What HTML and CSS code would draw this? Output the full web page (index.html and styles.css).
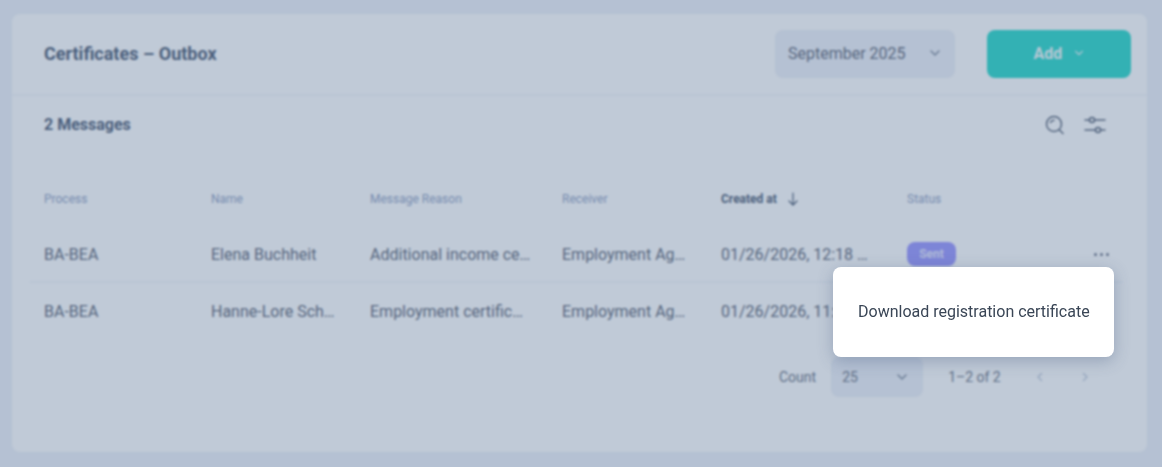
FILE: index.html
```html
<!DOCTYPE html>
<html lang="en">
<head>
    <meta charset="UTF-8">
    <meta name="viewport" content="width=device-width, initial-scale=1.0">
    <title>Certificates - Outbox</title>
    <link rel="stylesheet" href="styles.css">
</head>
<body>
    <main class="card">
        <header class="card-header">
            <h1>Certificates – Outbox</h1>
            <div class="select month-select">
                <span>September 2025</span>
                <svg class="chevron" width="12" height="12" viewBox="0 0 12 12"><path d="M2 4l4 4 4-4"/></svg>
            </div>
            <button class="add-button">
                <span>Add</span>
                <svg class="chevron" width="10" height="10" viewBox="0 0 12 12"><path d="M2 4l4 4 4-4"/></svg>
            </button>
        </header>

        <div class="toolbar">
            <h2>2 Messages</h2>
            <div class="tools">
                <svg class="tool" width="24" height="24" viewBox="0 0 24 24">
                    <circle cx="11" cy="11" r="7.500"/>
                    <path d="M7.500 9.500c.6-1.400 2-2.200 3.500-2.200M16.500 17l3.500 3.500"/>
                </svg>
                <svg class="tool" width="24" height="24" viewBox="0 0 24 24">
                    <path d="M2 7h4.500M11.500 7h10.500M2 17h10.500M17.500 17h4.500"/>
                    <circle cx="9" cy="7" r="2.500"/>
                    <circle cx="15" cy="17" r="2.500"/>
                </svg>
            </div>
        </div>

        <div class="table">
            <div class="row head-row">
                <div class="cell">Process</div>
                <div class="cell">Name</div>
                <div class="cell">Message Reason</div>
                <div class="cell">Receiver</div>
                <div class="cell sorted">
                    Created at
                    <svg width="14" height="14" viewBox="0 0 14 14"><path d="M7 1v12M3 9l4 4 4-4"/></svg>
                </div>
                <div class="cell">Status</div>
                <div class="cell"></div>
            </div>
            <div class="row">
                <div class="cell">BA-BEA</div>
                <div class="cell">Elena Buchheit</div>
                <div class="cell">Additional income certificate</div>
                <div class="cell">Employment Agency</div>
                <div class="cell">01/26/2026, 12:18 PM (CET)</div>
                <div class="cell"><span class="badge">Sent</span></div>
                <div class="cell more"><span></span><span></span><span></span></div>
            </div>
            <div class="row">
                <div class="cell">BA-BEA</div>
                <div class="cell">Hanne-Lore Schneider</div>
                <div class="cell">Employment certificate</div>
                <div class="cell">Employment Agency</div>
                <div class="cell">01/26/2026, 11:52 AM (CET)</div>
                <div class="cell"><span class="badge">Sent</span></div>
                <div class="cell more"><span></span><span></span><span></span></div>
            </div>
        </div>

        <footer class="pager">
            <span>Count</span>
            <div class="select count-select">
                <span>25</span>
                <svg class="chevron" width="12" height="12" viewBox="0 0 12 12"><path d="M2 4l4 4 4-4"/></svg>
            </div>
            <span class="range">1–2 of 2</span>
            <svg class="page-arrow" width="10" height="10" viewBox="0 0 10 10"><path d="M6.500 1.500L3 5l3.500 3.500"/></svg>
            <svg class="page-arrow" width="10" height="10" viewBox="0 0 10 10"><path d="M3.500 1.500L7 5 3.500 8.500"/></svg>
        </footer>
    </main>

    <div class="backdrop"></div>

    <div class="menu">Download registration certificate</div>
</body>
</html>
```

FILE: styles.css
```css
* {
    margin: 0;
    padding: 0;
    box-sizing: border-box;
}

body {
    font-family: Roboto, sans-serif;
    font-size: 16px;
    background: #eff2f9;
    color: #686f7f;
    height: 467px;
    overflow: hidden;
    padding: 14px 15px 15px 12px;
}

svg {
    fill: none;
    stroke: currentColor;
    stroke-linecap: round;
    stroke-linejoin: round;
    stroke-width: 1.5;
    flex-shrink: 0;
}

.card {
    height: 438px;
    background: white;
    border-radius: 8px;
}

.card-header {
    display: flex;
    align-items: center;
    height: 82px;
    padding: 0 16px 0 32px;
    border-bottom: 2px solid #f5f8fc;
}

h1 {
    font-size: 18px;
    font-weight: 700;
    color: #56657c;
    margin-right: auto;
    margin-bottom: 2px;
}

.select {
    display: flex;
    align-items: center;
    justify-content: space-between;
    background: #eff2f9;
    border-radius: 8px;
}

.select .chevron {
    color: #8a94a6;
}

.month-select {
    width: 180px;
    height: 48px;
    padding: 0 14px 2px 13px;
    margin-right: 32px;
}

.add-button {
    display: flex;
    align-items: center;
    justify-content: center;
    gap: 12px;
    width: 144px;
    height: 48px;
    padding-bottom: 2px;
    border: none;
    border-radius: 8px;
    background: #34dbcd;
    color: #f4fbfb;
    font-family: Roboto, sans-serif;
    font-size: 16px;
    font-weight: 700;
}

.toolbar {
    display: flex;
    align-items: center;
    justify-content: space-between;
    height: 75px;
    padding: 0 40px 18px 32px;
}

h2 {
    font-size: 16px;
    font-weight: 700;
    color: #56657c;
}

.tools {
    display: flex;
    gap: 16px;
    color: #646f82;
}

.table {
    margin-left: 18px;
    margin-right: 25px;
}

.row {
    display: grid;
    grid-template-columns: 167px 159px 192px 159px 186px 172px 1fr;
    align-items: center;
    height: 56px;
    padding-left: 14px;
    border-bottom: 2px solid #f5f8fc;
}

.row:last-child {
    border-bottom: none;
}

.cell {
    padding-right: 31px;
    white-space: nowrap;
    overflow: hidden;
    text-overflow: ellipsis;
}

.head-row {
    font-size: 12px;
    color: #96a6c6;
    border-bottom: none;
}

.sorted {
    display: flex;
    align-items: center;
    gap: 9px;
    color: #56657c;
    font-weight: 700;
}

.sorted svg {
    stroke-width: 1.2;
}

.badge {
    display: inline-block;
    width: 49px;
    height: 24px;
    line-height: 24px;
    text-align: center;
    border-radius: 8px;
    background: #9f9bff;
    color: #e6e8ff;
    font-size: 12px;
    font-weight: 700;
}

.more {
    display: flex;
    gap: 3px;
    padding: 0 0 0 15px;
    overflow: visible;
}

.more span {
    width: 3px;
    height: 3px;
    border-radius: 50%;
    background: #737c8e;
}

.pager {
    display: flex;
    align-items: center;
    height: 40px;
    margin-top: 18px;
    padding-left: 767px;
    font-size: 14px;
    color: #737b8b;
}

.count-select {
    width: 92px;
    height: 40px;
    margin-left: 15px;
    padding: 0 15px 0 11px;
}

.range {
    margin-left: 25px;
    margin-right: 34px;
}

.page-arrow {
    margin-right: 35px;
    color: #c9d2e0;
}

.backdrop {
    position: fixed;
    inset: 0;
    background: rgba(52, 85, 125, 0.31);
    backdrop-filter: blur(1px);
}

.menu {
    position: fixed;
    left: 833px;
    top: 267px;
    width: 281px;
    height: 90px;
    display: flex;
    align-items: center;
    padding: 0 0 2px 25px;
    background: white;
    border-radius: 8px;
    box-shadow: 0 4px 16px rgba(52, 75, 115, 0.3);
    color: #3a4656;
}
```
